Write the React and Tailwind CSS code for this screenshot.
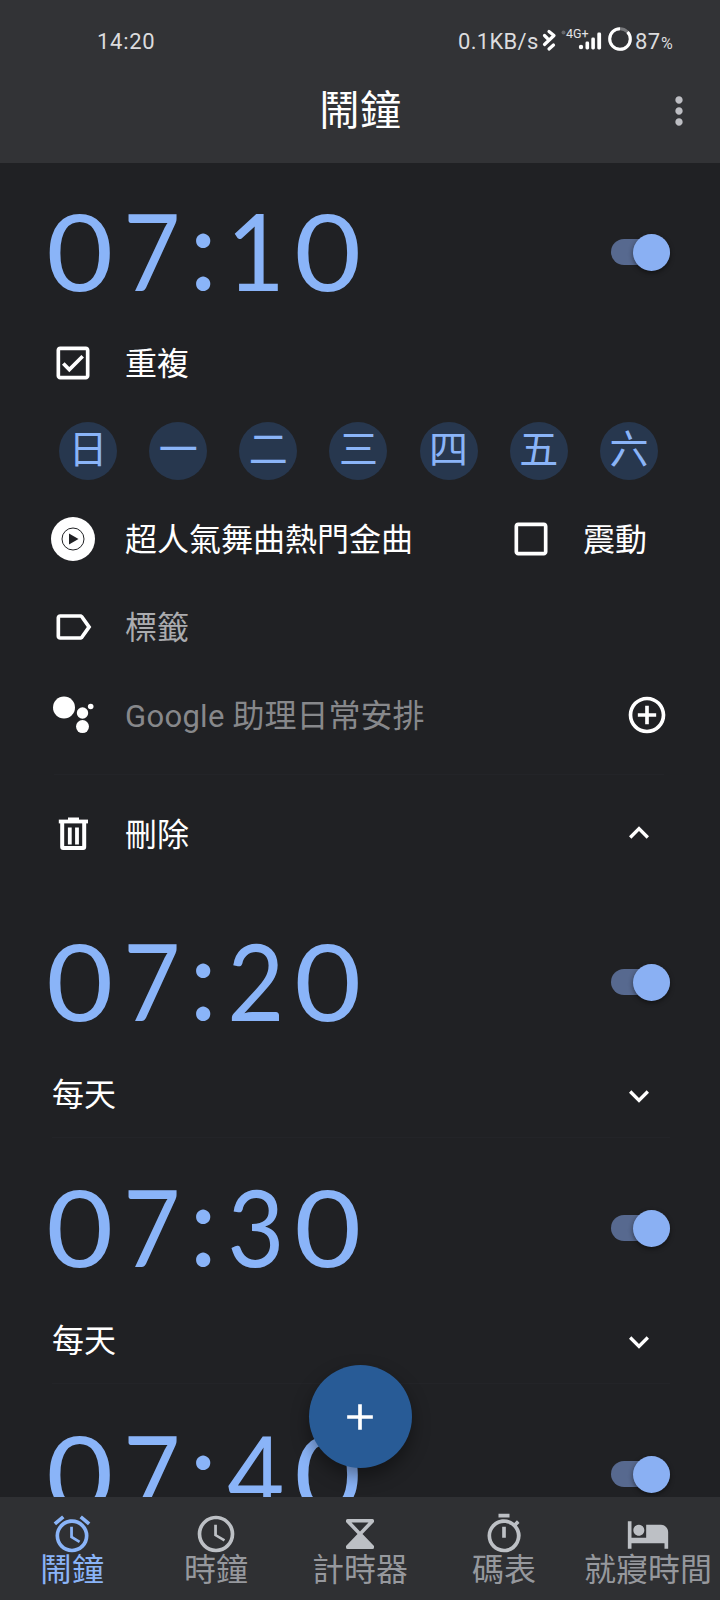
import React, { useState } from 'react';
import {
  MdAccessAlarm,
  MdAccessTime,
  MdAdd,
  MdAddCircleOutline,
  MdCheckBoxOutlineBlank,
  MdExpandLess,
  MdExpandMore,
  MdHotel,
  MdLabelOutline,
  MdMoreVert,
  MdOutlineCheckBox,
  MdOutlineTimer,
} from 'react-icons/md';

const WEEKDAYS = ['日', '一', '二', '三', '四', '五', '六'];

const StatusBar = () => (
  <div className="flex h-[84px] shrink-0 items-center justify-between pl-[97px] pr-[46px] text-[22px] leading-none text-[#dcdcde]">
    <span className="tracking-[0.7px]">14:20</span>
    <div className="flex items-center">
      <span className="w-[83px] whitespace-nowrap tracking-[0.3px]">0.1KB/s</span>
      {/* Bluetooth, signal and battery ring */}
      <svg width="94" height="32" viewBox="0 0 94 32" className="-mt-1.5 shrink-0" fill="none">
        <path d="M8 8.500L13 12.500L3.500 21.500M3.500 12.500L6.500 15.500M8 26L12.500 22" stroke="#fff" strokeWidth="3.2" strokeLinecap="round" strokeLinejoin="round" />
        <circle cx="22.5" cy="9.5" r="2" fill="#66676a" />
        <text x="25" y="14.7" fill="#e4e4e6" fontSize="12.5" fontFamily="Roboto, sans-serif">4G+</text>
        <g fill="#fff">
          <circle cx="40" cy="24" r="2.2" />
          <rect x="44.5" y="18.5" width="3.6" height="8" rx="1.4" />
          <rect x="50.3" y="14.5" width="3.6" height="12" rx="1.4" />
          <rect x="56.3" y="9.5" width="3.8" height="17" rx="1.4" />
        </g>
        <circle cx="79" cy="16" r="10.3" stroke="#77787b" strokeWidth="3" />
        <circle cx="79" cy="16" r="10.3" stroke="#fff" strokeWidth="3" pathLength="100" strokeDasharray="87 13" transform="rotate(-43 79 16)" />
      </svg>
      <span className="w-[26px] tracking-[0.4px]">87</span>
      <span className="mt-1 w-[13px] text-[16px]">%</span>
    </div>
  </div>
);

const Toggle = () => (
  <div className="mb-[2px] mr-[50px] flex h-[26px] w-[59px] items-center justify-end rounded-full bg-[#57698f]">
    <div className="size-[37px] shrink-0 rounded-full bg-[#8ab0f3] shadow-[0_2px_5px_rgba(0,0,0,0.45)]" />
  </div>
);

// Zeros run wider than the font's own, the other digits a little narrower
const DIGIT_SHAPE = {
  0: 'scale-x-[1.09]',
  1: 'scale-x-[0.95]',
  ':': 'scale-[1.07] -translate-y-1',
};

const DIGIT_CELLS = ['w-[66px]', 'w-[77px]', 'w-[27px]', 'w-[77px]', 'w-[67px]'];

const TimeRow = ({ time }) => (
  <div className="flex h-[78px] items-center justify-between pl-[47px]">
    <div className="mb-[6px] flex font-[Lato] text-[106px] leading-none text-[#8ab4f8]">
      {time.split('').map((char, i) => (
        <span key={i} className={`flex justify-center ${DIGIT_CELLS[i]}`}>
          <span className={DIGIT_SHAPE[char] || 'scale-x-[0.93]'}>{char}</span>
        </span>
      ))}
    </div>
    <Toggle />
  </div>
);

const DetailRow = ({ icon, children }) => (
  <div className="flex h-[88px] items-center pl-[51px] text-[32px]">
    <div className="mr-[30px] flex size-11 shrink-0 items-center justify-center">{icon}</div>
    {children}
  </div>
);

const MusicIcon = () => (
  <svg width="44" height="44" viewBox="0 0 44 44" className="shrink-0">
    <circle cx="22" cy="22" r="22" fill="#fff" />
    <circle cx="22" cy="22" r="11" fill="none" stroke="#202124" strokeWidth="1" />
    <path d="M18 16.500v11l9.500-5.500z" fill="#202124" />
  </svg>
);

const AssistantIcon = () => (
  <svg width="44" height="44" viewBox="0 0 44 44" className="shrink-0" fill="#fff">
    <circle cx="13" cy="14.5" r="11" />
    <circle cx="31.5" cy="20" r="5.7" />
    <circle cx="39.7" cy="13.5" r="2.8" />
    <circle cx="31.5" cy="33.6" r="6.5" />
  </svg>
);

const TrashIcon = () => (
  <svg width="44" height="44" viewBox="0 0 44 44" className="shrink-0" fill="none" stroke="#fff">
    <path d="M7.800 9.500h29.200" strokeWidth="3.8" />
    <path d="M17 7h11" strokeWidth="3" />
    <path d="M11.200 10.500v24.500q0 1 1 1h20q1 0 1-1v-24.500" strokeWidth="4" />
    <path d="M18.800 15.500v17M26 15.500v17" strokeWidth="3.8" />
  </svg>
);

const HourglassIcon = () => (
  <svg width="44" height="44" viewBox="0 0 44 44" className="shrink-0" fill="currentColor" fillRule="evenodd">
    <path d="M8 8.500q0-1.500 1.500-1.500h25q1.500 0 1.500 1.500v1.500L24.500 22 36 34v1.500q0 1.500-1.500 1.500h-25q-1.500 0-1.500-1.500V34L19.500 22 8 10zM13.500 10.500L22 19.500l8.500-9z" />
  </svg>
);

const ExpandedAlarm = ({ time }) => (
  <section className="h-[729px] shrink-0 pt-[51px]">
    <TimeRow time={time} />
    <div className="mt-[27px]">
      <DetailRow icon={<MdOutlineCheckBox size={44} />}>
        <span className="pt-[2px]">重複</span>
      </DetailRow>
    </div>
    <div className="flex h-[88px] items-center justify-between pl-[59px] pr-[62px]">
      {WEEKDAYS.map((day) => (
        <div key={day} className="flex size-[58px] items-center justify-center rounded-full bg-[#27374e] pb-[2px] text-[39px] leading-none text-[#8ab4f8]">
          {day}
        </div>
      ))}
    </div>
    <DetailRow icon={<MusicIcon />}>
      <span className="flex-1 pt-[2px]">超人氣舞曲熱門金曲</span>
      <MdCheckBoxOutlineBlank size={44} />
      <span className="ml-[30px] mr-[73px] pt-[2px]">震動</span>
    </DetailRow>
    <DetailRow icon={<MdLabelOutline size={44} />}>
      <span className="pt-[2px] text-[#abacaf]">標籤</span>
    </DetailRow>
    <DetailRow icon={<AssistantIcon />}>
      <span className="flex-1 pt-[2px] text-[#87888b]">
        <span className="text-[31px] tracking-[0.3px]">Google</span> 助理日常安排
      </span>
      <MdAddCircleOutline size={44} className="mr-[51px]" />
    </DetailRow>
    <div className="ml-[54px] mr-[56px] mt-[15px] h-px bg-[#232428]" />
    <div className="mt-[15px]">
      <DetailRow icon={<TrashIcon />}>
        <span className="flex-1 pt-[2px]">刪除</span>
        <MdExpandLess size={40} className="mb-[2px] mr-[61px]" />
      </DetailRow>
    </div>
  </section>
);

const CollapsedAlarm = ({ time }) => (
  <section className="h-[246px] shrink-0 pt-[52px]">
    <TimeRow time={time} />
    <div className="mt-[27px] flex h-[88px] items-center justify-between pl-[52px] pr-[61px] text-[32px]">
      <span className="pt-[3px]">每天</span>
      <MdExpandMore size={40} className="mt-[5px]" />
    </div>
    <div className="ml-[52px] mr-[50px] h-px bg-[#232428]" />
  </section>
);

const TABS = [
  { label: '鬧鐘', icon: <MdAccessAlarm size={44} /> },
  { label: '時鐘', icon: <MdAccessTime size={44} /> },
  { label: '計時器', icon: <HourglassIcon /> },
  { label: '碼表', icon: <MdOutlineTimer size={44} /> },
  { label: '就寢時間', icon: <MdHotel size={44} /> },
];

const App = () => {
  const [activeTab, setActiveTab] = useState(0);

  return (
    <div className="relative flex h-[1600px] w-[720px] flex-col overflow-hidden bg-[#202124] font-[Roboto,'Noto_Sans_CJK_TC',sans-serif] text-white">
      {/* Header */}
      <header className="flex h-[163px] shrink-0 flex-col bg-[#323336]">
        <StatusBar />
        <div className="flex h-[54px] items-center pl-[63px] pr-[19px]">
          <h1 className="flex-1 text-center text-[41px] leading-none">鬧鐘</h1>
          <MdMoreVert size={44} className="text-[#bdbec3]" />
        </div>
      </header>

      {/* Alarm list */}
      <main className="flex min-h-0 flex-1 flex-col overflow-hidden">
        <ExpandedAlarm time="07:10" />
        <CollapsedAlarm time="07:20" />
        <CollapsedAlarm time="07:30" />
        <CollapsedAlarm time="07:40" />
      </main>

      {/* Add button */}
      <button className="absolute bottom-[132px] left-[308.5px] flex size-[103px] items-center justify-center rounded-full bg-[#285b96] shadow-[0_8px_18px_rgba(0,0,0,0.4)]">
        <MdAdd size={44} />
      </button>

      {/* Bottom tabs */}
      <nav className="grid h-[103px] shrink-0 grid-cols-5 bg-[#2f3033]">
        {TABS.map((tab, i) => (
          <button key={tab.label} onClick={() => setActiveTab(i)} className="flex flex-col items-center pt-[15px]">
            <span className={i === activeTab ? 'text-[#8ab4f8]' : 'text-[#bdc0c5]'}>{tab.icon}</span>
            <span className={`-mt-[3px] whitespace-nowrap text-[32px] leading-[34px] ${i === activeTab ? 'text-[#8ab4f8]' : 'text-[#96989d]'}`}>
              {tab.label}
            </span>
          </button>
        ))}
      </nav>
    </div>
  );
};

export default App;
